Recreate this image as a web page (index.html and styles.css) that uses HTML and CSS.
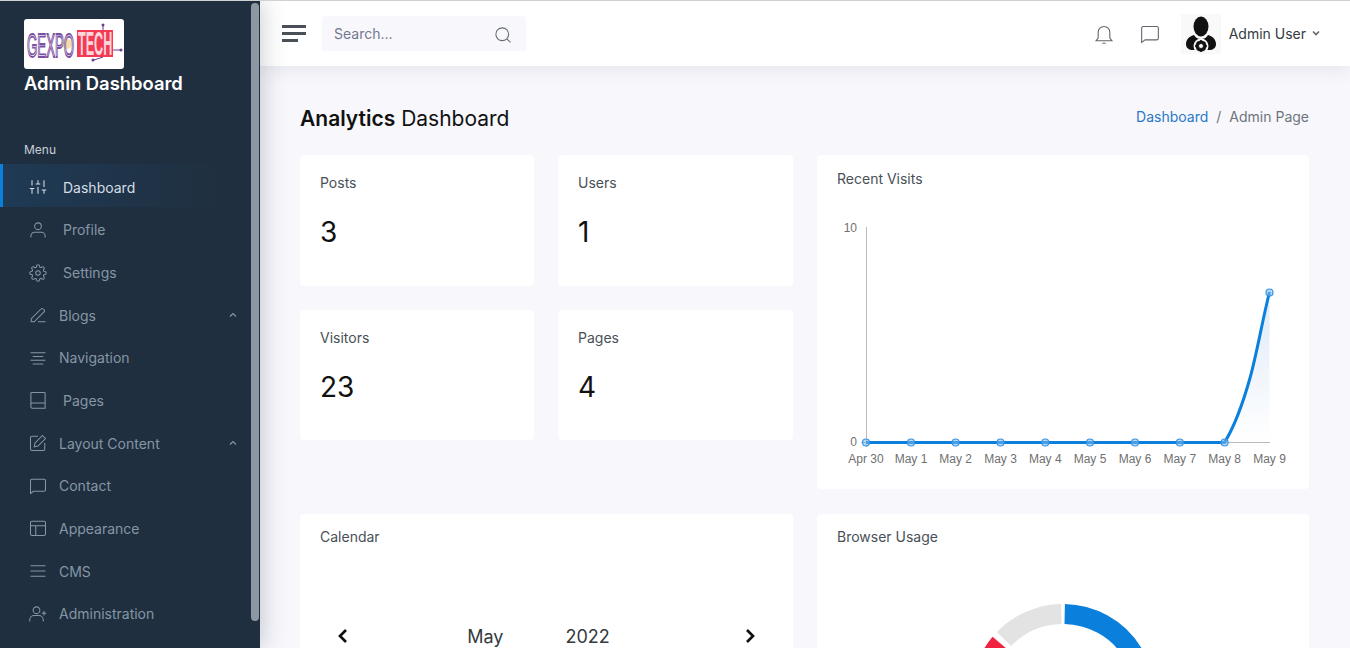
FILE: index.html
```html
<!DOCTYPE html>
<html lang="en">

<head>
    <meta charset="UTF-8">
    <title>Admin Dashboard</title>
    <link rel="stylesheet" href="styles.css">
</head>

<body>
    <div class="app">
        <aside class="sidebar">
            <div class="sidebar-inner">
                <div class="logo">
                    <svg width="100" height="50" viewBox="0 0 100 50">
                        <circle cx="43" cy="25" r="5" fill="#f0dfa8"/>
                        <text transform="translate(3 38) scale(0.39 1)" class="logo-gexpo">GEXPO</text>
                        <rect x="53" y="11" width="36" height="27" fill="#f23a55"/>
                        <text transform="translate(54 36) scale(0.37 1)" class="logo-tech">TECH</text>
                        <path d="M79 5V11M79 38L70 41M89 31H96" stroke="#6a3d8f" fill="none"/>
                        <circle cx="79" cy="6" r="1.5" fill="#6a3d8f"/>
                        <circle cx="69" cy="41" r="1.5" fill="#6a3d8f"/>
                        <circle cx="97" cy="31" r="1.5" fill="#6a3d8f"/>
                    </svg>
                </div>
                <div class="brand">Admin Dashboard</div>
                <div class="menu-title">Menu</div>
                <nav class="nav">
                    <a class="nav-item active">
                        <svg class="ico" viewBox="0 0 24 24"><path d="M4 21v-7M4 10V3M12 21v-9M12 8V3M20 21v-5M20 12V3M1 14h6M9 8h6M17 16h6"/></svg>
                        <span class="wide">Dashboard</span>
                    </a>
                    <a class="nav-item">
                        <svg class="ico" viewBox="0 0 24 24"><circle cx="12" cy="7" r="4.5"/><path d="M2.500 22v-2a5 5 0 0 1 5-5h9a5 5 0 0 1 5 5v2"/></svg>
                        <span class="wide">Profile</span>
                    </a>
                    <a class="nav-item">
                        <svg class="ico" viewBox="0 0 24 24"><circle cx="12" cy="12" r="3"/><path d="M19.4 15a1.65 1.65 0 0 0 .33 1.82l.06.06a2 2 0 0 1 0 2.83 2 2 0 0 1-2.83 0l-.06-.06a1.65 1.65 0 0 0-1.82-.33 1.65 1.65 0 0 0-1 1.51V21a2 2 0 0 1-2 2 2 2 0 0 1-2-2v-.09A1.65 1.65 0 0 0 9 19.4a1.65 1.65 0 0 0-1.82.33l-.06.06a2 2 0 0 1-2.83 0 2 2 0 0 1 0-2.83l.06-.06a1.65 1.65 0 0 0 .33-1.82 1.65 1.65 0 0 0-1.51-1H3a2 2 0 0 1-2-2 2 2 0 0 1 2-2h.09A1.65 1.65 0 0 0 4.6 9a1.65 1.65 0 0 0-.33-1.82l-.06-.06a2 2 0 0 1 0-2.83 2 2 0 0 1 2.83 0l.06.06a1.65 1.65 0 0 0 1.82.33H9a1.65 1.65 0 0 0 1-1.51V3a2 2 0 0 1 2-2 2 2 0 0 1 2 2v.09a1.65 1.65 0 0 0 1 1.51 1.65 1.65 0 0 0 1.82-.33l.06-.06a2 2 0 0 1 2.83 0 2 2 0 0 1 0 2.83l-.06.06a1.65 1.65 0 0 0-.33 1.82V9a1.65 1.65 0 0 0 1.51 1H21a2 2 0 0 1 2 2 2 2 0 0 1-2 2h-.09a1.65 1.65 0 0 0-1.51 1z"/></svg>
                        <span class="wide">Settings</span>
                    </a>
                    <a class="nav-item">
                        <svg class="ico" viewBox="0 0 24 24"><path d="M3 21v-4L16 4a2 2 0 0 1 3 0l1 1a2 2 0 0 1 0 3L7 21H3zM12 21h10"/></svg>
                        <span>Blogs</span>
                        <svg class="caret" viewBox="0 0 10 10"><path d="M2 6.5L5 3.5L8 6.5"/></svg>
                    </a>
                    <a class="nav-item">
                        <svg class="ico" viewBox="0 0 24 24"><path d="M2 5h20M5 10h14M2 15h20M5 20h14"/></svg>
                        <span>Navigation</span>
                    </a>
                    <a class="nav-item">
                        <svg class="ico" viewBox="0 0 24 24"><path d="M2.500 18V3a1 1 0 0 1 1-1h17a1 1 0 0 1 1 1v20h-17a2 2 0 0 1-2-2v-3a2 2 0 0 1 2-2h17"/></svg>
                        <span class="wide">Pages</span>
                    </a>
                    <a class="nav-item">
                        <svg class="ico" viewBox="0 0 24 24"><path d="M12 3H4a2 2 0 0 0-2 2v15a2 2 0 0 0 2 2h15a2 2 0 0 0 2-2v-8"/><path d="M18 2l4 4-10 10-5 1 1-5L18 2z"/></svg>
                        <span>Layout Content</span>
                        <svg class="caret" viewBox="0 0 10 10"><path d="M2 6.5L5 3.5L8 6.5"/></svg>
                    </a>
                    <a class="nav-item">
                        <svg class="ico" viewBox="0 0 24 24"><path d="M6 19l-4 3V5a2 2 0 0 1 2-2h16a2 2 0 0 1 2 2v12a2 2 0 0 1-2 2H6z"/></svg>
                        <span>Contact</span>
                    </a>
                    <a class="nav-item">
                        <svg class="ico" viewBox="0 0 24 24"><rect x="2" y="3" width="20" height="19" rx="2"/><path d="M2 9h20M9 9v13"/></svg>
                        <span>Appearance</span>
                    </a>
                    <a class="nav-item">
                        <svg class="ico" viewBox="0 0 24 24"><path d="M2 5h20M2 12h20M2 19h20"/></svg>
                        <span>CMS</span>
                    </a>
                    <a class="nav-item">
                        <svg class="ico" viewBox="0 0 24 24"><circle cx="10" cy="7" r="4.5"/><path d="M1 22v-2a6 6 0 0 1 6-6h6a6 6 0 0 1 6 6v2M20 8v6M17 11h6"/></svg>
                        <span>Administration</span>
                    </a>
                </nav>
            </div>
            <div class="side-scroll"></div>
        </aside>

        <div class="main">
            <header class="topbar">
                <div class="burger"><i></i><i></i><i class="short"></i></div>
                <div class="search">
                    <span>Search...</span>
                    <svg class="search-ico" viewBox="0 0 24 24"><circle cx="11" cy="11" r="8.5"/><path d="M17.5 17.5L22 22"/></svg>
                </div>
                <div class="top-right">
                    <svg class="top-ico" viewBox="0 0 24 24"><path d="M19 17V10a7 7 0 0 0-14 0v7l-2.5 3h19L19 17zM10 23h4"/></svg>
                    <svg class="top-ico" viewBox="0 0 24 24"><path d="M6 19l-4 3V5a2 2 0 0 1 2-2h16a2 2 0 0 1 2 2v12a2 2 0 0 1-2 2H6z"/></svg>
                    <div class="user">
                        <div class="avatar">
                            <svg width="40" height="40" viewBox="0 0 40 40">
                                <ellipse cx="20" cy="12.5" rx="7.5" ry="10"/>
                                <path d="M13 21c-4 1-8 4-8 9 0 4 3 6 7 6h16c4 0 7-2 7-6 0-5-4-8-8-9-2 3-4 4-7 4s-5-1-7-4z"/>
                                <circle cx="20" cy="32" r="7.5" fill="#f9f9f9"/>
                                <circle cx="20" cy="32" r="4" fill="none" stroke="#111" stroke-width="3"/>
                                <path d="M20 26v12M14 32h12M16 28l8 8M24 28l-8 8" stroke="#111" stroke-width="1.6"/>
                                <circle cx="20" cy="32" r="2" fill="#f9f9f9"/>
                            </svg>
                        </div>
                        <span class="user-name">Admin User</span>
                        <svg class="user-caret" viewBox="0 0 10 10"><path d="M2 3.5L5 6.5L8 3.5"/></svg>
                    </div>
                </div>
            </header>

            <div class="content">
                <div class="page-head">
                    <h1><b>Analytics</b> Dashboard</h1>
                    <div class="crumbs"><a>Dashboard</a><span class="sep">/</span><span>Admin Page</span></div>
                </div>

                <div class="top-grid">
                    <div class="stats">
                        <div class="card stat"><div class="card-title">Posts</div><div class="num">3</div></div>
                        <div class="card stat"><div class="card-title">Users</div><div class="num">1</div></div>
                        <div class="card stat"><div class="card-title">Visitors</div><div class="num">23</div></div>
                        <div class="card stat"><div class="card-title">Pages</div><div class="num">4</div></div>
                    </div>
                    <div class="card visits">
                        <div class="card-title">Recent Visits</div>
                        <svg class="chart" width="492" height="300" viewBox="817 190 492 300">
                            <defs>
                                <linearGradient id="area" x1="0" y1="0" x2="0" y2="1">
                                    <stop offset="0" stop-color="#dfeaf8"/>
                                    <stop offset="1" stop-color="#ffffff"/>
                                </linearGradient>
                            </defs>
                            <path d="M1224.5 442.5C1236 424 1243 403 1250 378C1257 353 1262 322 1269.5 292V442.5Z" fill="url(#area)"/>
                            <path d="M866.5 227V447M861 442.5H1270" stroke="#bbb" fill="none"/>
                            <text x="857" y="232" class="tick" text-anchor="end">10</text>
                            <text x="857" y="446" class="tick" text-anchor="end">0</text>
                            <g class="tick" text-anchor="middle">
                                <text x="866" y="463">Apr 30</text>
                                <text x="911" y="463">May 1</text>
                                <text x="955.6" y="463">May 2</text>
                                <text x="1000.5" y="463">May 3</text>
                                <text x="1045.3" y="463">May 4</text>
                                <text x="1090" y="463">May 5</text>
                                <text x="1135" y="463">May 6</text>
                                <text x="1179.8" y="463">May 7</text>
                                <text x="1224.6" y="463">May 8</text>
                                <text x="1269.5" y="463">May 9</text>
                            </g>
                            <path d="M866 442.5H1224.5C1236 424 1243 403 1250 378C1257 353 1262 322 1269.5 292" stroke="#0a7fdc" stroke-width="3" fill="none"/>
                            <g class="dots">
                                <circle cx="866" cy="442.5" r="3.5"/>
                                <circle cx="911" cy="442.5" r="3.5"/>
                                <circle cx="955.6" cy="442.5" r="3.5"/>
                                <circle cx="1000.5" cy="442.5" r="3.5"/>
                                <circle cx="1045.3" cy="442.5" r="3.5"/>
                                <circle cx="1090" cy="442.5" r="3.5"/>
                                <circle cx="1135" cy="442.5" r="3.5"/>
                                <circle cx="1179.8" cy="442.5" r="3.5"/>
                                <circle cx="1224.6" cy="442.5" r="3.5"/>
                                <circle cx="1269.5" cy="292.5" r="3.5"/>
                            </g>
                        </svg>
                    </div>
                </div>

                <div class="bottom-grid">
                    <div class="card calendar">
                        <div class="card-title">Calendar</div>
                        <div class="cal-head">
                            <svg class="cal-arrow" viewBox="0 0 12 12"><path d="M8 2L4 6L8 10"/></svg>
                            <div class="cal-label"><span>May</span><span>2022</span></div>
                            <svg class="cal-arrow" viewBox="0 0 12 12"><path d="M4 2L8 6L4 10"/></svg>
                        </div>
                    </div>
                    <div class="card browsers">
                        <div class="card-title">Browser Usage</div>
                        <svg class="donut" width="492" height="260" viewBox="817 590 492 260">
                            <path d="M1064.7 614A82 82 0 0 1 1134 737" stroke="#0a7fdc"/>
                            <path d="M1061.3 614A82 82 0 0 0 1004 639" stroke="#e3e3e3"/>
                            <path d="M1000.2 643.3A82 82 0 0 0 992 737" stroke="#f0223f"/>
                        </svg>
                    </div>
                </div>
            </div>
        </div>
    </div>
</body>

</html>
```

FILE: styles.css
```css
* {
    box-sizing: border-box;
}

html, body {
    margin: 0;
    height: 100%;
    overflow: hidden;
}

body {
    font-family: Inter, "Liberation Sans", sans-serif;
    font-size: 14px;
    color: #495057;
    background: #f7f7fc;
    border-top: 1px solid #cfd1d3;
}

.app {
    display: flex;
    height: 647px;
    overflow: hidden;
}

/* sidebar */
.sidebar {
    display: flex;
    flex: 0 0 260px;
    background: #1f2f3f;
    box-shadow: 0 0 24px rgba(40, 50, 70, 0.28);
    position: relative;
    z-index: 2;
}

.sidebar-inner {
    flex: 1;
    min-width: 0;
    padding-top: 18px;
}

.side-scroll {
    flex: 0 0 8px;
    height: 618px;
    margin: 2px 1px 0 0;
    border-radius: 4px;
    background: #8d98a3;
}

.logo {
    width: 100px;
    height: 50px;
    margin-left: 24px;
    background: #fff;
    border-radius: 3px;
}

.logo svg {
    display: block;
}

.logo-gexpo {
    font-family: "Liberation Sans", sans-serif;
    font-size: 34px;
    fill: #fff;
    fill-opacity: 0.4;
    stroke: #7b4fa0;
    stroke-width: 1.8px;
}

.logo-tech {
    font-family: "Liberation Sans", sans-serif;
    font-size: 34px;
    font-weight: 700;
    fill: #ffd5dc;
}

.brand {
    margin: 3px 0 0 24px;
    color: #fff;
    font-size: 18.4px;
    font-weight: 600;
    line-height: 22px;
}

.menu-title {
    margin: 47.95px 0 0 24px;
    color: #c6d0da;
    font-size: 12px;
    line-height: 15px;
}

.nav {
    margin-top: 7px;
    width: 251px;
}

.nav-item {
    display: flex;
    align-items: center;
    height: 42.65px;
    padding: 4px 13px 0 28px;
    color: #8596a5;
}

.nav-item.active {
    color: #d5dde5;
    border-left: 3px solid #0a7fdc;
    padding-left: 25px;
    background: linear-gradient(to right, #1f3a55, #1f2f3f 90%);
}

.ico {
    flex: 0 0 20px;
    width: 20px;
    height: 18px;
    margin-right: 11px;
    fill: none;
    stroke: currentColor;
    stroke-width: 1.4;
}

.wide {
    margin-left: 4px;
}

.caret {
    width: 10px;
    height: 10px;
    margin-left: auto;
    fill: none;
    stroke: currentColor;
    stroke-width: 1.2;
}

/* topbar */
.main {
    flex: 1;
    min-width: 0;
}

.topbar {
    display: flex;
    align-items: center;
    height: 65px;
    padding: 0 29px 0 22px;
    background: #fff;
    box-shadow: 0 2px 18px rgba(40, 50, 70, 0.1);
    position: relative;
    z-index: 1;
}

.burger {
    display: flex;
    flex-direction: column;
    gap: 3.5px;
    width: 24px;
}

.burger i {
    display: block;
    height: 3.5px;
    background: #495057;
}

.burger i.short {
    width: 16px;
}

.search {
    display: flex;
    align-items: center;
    justify-content: space-between;
    width: 204px;
    height: 35px;
    margin-left: 16px;
    padding: 0 14px 0 12px;
    background: #f7f7fc;
    border-radius: 4px;
    color: #74788d;
}

.search-ico {
    width: 18px;
    height: 18px;
    fill: none;
    stroke: #666d75;
    stroke-width: 1.4;
    margin-top: 2px;
}

.top-right {
    display: flex;
    align-items: center;
    margin-left: auto;
}

.top-ico {
    width: 20px;
    height: 20px;
    margin-right: 26px;
    fill: none;
    stroke: #60666d;
    stroke-width: 1.3;
}

.user {
    display: flex;
    align-items: center;
    margin-left: -5px;
}

.avatar {
    width: 40px;
    height: 40px;
    background: #f9f9f9;
}

.avatar svg {
    display: block;
    fill: #111;
}

.user-name {
    margin-left: 8px;
    color: #343a40;
}

.user-caret {
    width: 10px;
    height: 10px;
    margin-left: 5px;
    fill: none;
    stroke: #60666d;
    stroke-width: 1.6;
    margin-top: -2px;
}

/* content */
.content {
    padding: 0 41px 0 40px;
}

.page-head {
    display: flex;
    align-items: center;
    justify-content: space-between;
    height: 89px;
    padding-top: 15px;
}

h1 {
    margin: 0;
    color: #111;
    font-size: 21px;
    font-weight: 400;
}

h1 b {
    font-weight: 600;
}

.crumbs {
    display: flex;
    gap: 8px;
    margin-bottom: 4px;
    color: #6c757d;
}

.crumbs a {
    color: #2a7ac8;
}

.top-grid, .bottom-grid {
    display: grid;
    grid-template-columns: 493px 1fr;
    gap: 24px;
}

.stats {
    display: grid;
    grid-template-columns: 234px 235px;
    grid-template-rows: 131px 130px;
    gap: 24px;
}

.card {
    background: #fff;
    border-radius: 4px;
}

.card-title {
    line-height: 17px;
}

.stat {
    padding: 19px 20px;
}

.num {
    margin-top: 23.5px;
    color: #111;
    font-size: 28px;
    line-height: 34px;
}

.visits {
    height: 334px;
    padding-top: 15px;
}

.visits .card-title, .browsers .card-title {
    padding-left: 20px;
}

.chart {
    display: block;
    margin-top: 3px;
}

.tick {
    font-family: "Liberation Sans", sans-serif;
    font-size: 12px;
    fill: #707070;
}

.dots circle {
    fill: rgba(120, 185, 240, 0.55);
    stroke: #3a94e2;
    stroke-width: 1.2;
}

.bottom-grid {
    margin-top: 25px;
}

.calendar {
    height: 300px;
    padding: 14px 20px;
}

.cal-head {
    display: flex;
    align-items: center;
    justify-content: space-between;
    margin-top: 77px;
    padding: 0 14px;
}

.cal-arrow {
    width: 18px;
    height: 18px;
    fill: none;
    stroke: #111;
    stroke-width: 1.8;
}

.cal-label {
    display: flex;
    gap: 62px;
    margin: 2px 16px 0 0;
    color: #343a40;
    font-size: 18px;
    line-height: 26px;
}

.browsers {
    height: 300px;
    padding-top: 14px;
}

.donut {
    display: block;
    margin-top: 45px;
}

.donut path {
    fill: none;
    stroke-width: 20;
}
```
